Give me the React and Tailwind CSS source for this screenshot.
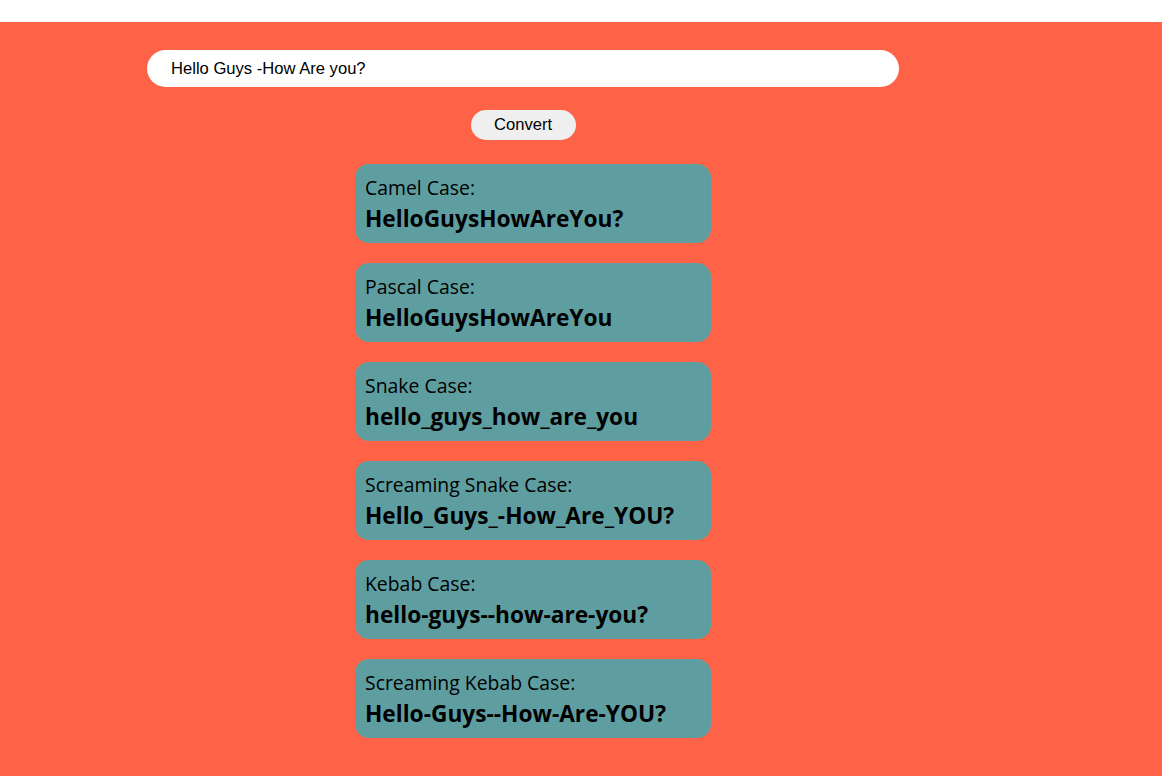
const results = [
  { label: 'Camel Case:', value: 'HelloGuysHowAreYou?' },
  { label: 'Pascal Case:', value: 'HelloGuysHowAreYou' },
  { label: 'Snake Case:', value: 'hello_guys_how_are_you' },
  { label: 'Screaming Snake Case:', value: 'Hello_Guys_-How_Are_YOU?' },
  { label: 'Kebab Case:', value: 'hello-guys--how-are-you?' },
  { label: 'Screaming Kebab Case:', value: 'Hello-Guys--How-Are-YOU?' },
];

export default function App() {
  return (
    <div className="min-h-screen bg-white pt-[22px]">
      <div className="bg-[#ff6347] min-h-[754px] pt-[28px] pb-[38px]">
        <div className="ml-[147px] w-[752px] flex flex-col">
          <input
            defaultValue="Hello Guys -How Are you?"
            className="h-[37px] w-full rounded-full bg-white px-6 text-[16.6px] text-black outline-none font-['Liberation_Sans',Arial,sans-serif]"
          />
          <button className="mx-auto mt-[23px] h-[30px] w-[105px] rounded-full bg-[#efefef] text-[16.6px] text-black font-['Liberation_Sans',Arial,sans-serif]">
            Convert
          </button>
          <div className="ml-[208px] mt-[24px] flex flex-col gap-5">
            {results.map((r) => (
              <div
                key={r.label}
                className="w-[356px] h-[79px] rounded-[14px] bg-[#5f9ea0] px-[10px] pt-[11px] text-black font-['Open_Sans',sans-serif]"
              >
                <div className="text-[19.4px] leading-[26px]">{r.label}</div>
                <div className="text-[22.7px] leading-[36px] font-bold">{r.value}</div>
              </div>
            ))}
          </div>
        </div>
      </div>
    </div>
  );
}
